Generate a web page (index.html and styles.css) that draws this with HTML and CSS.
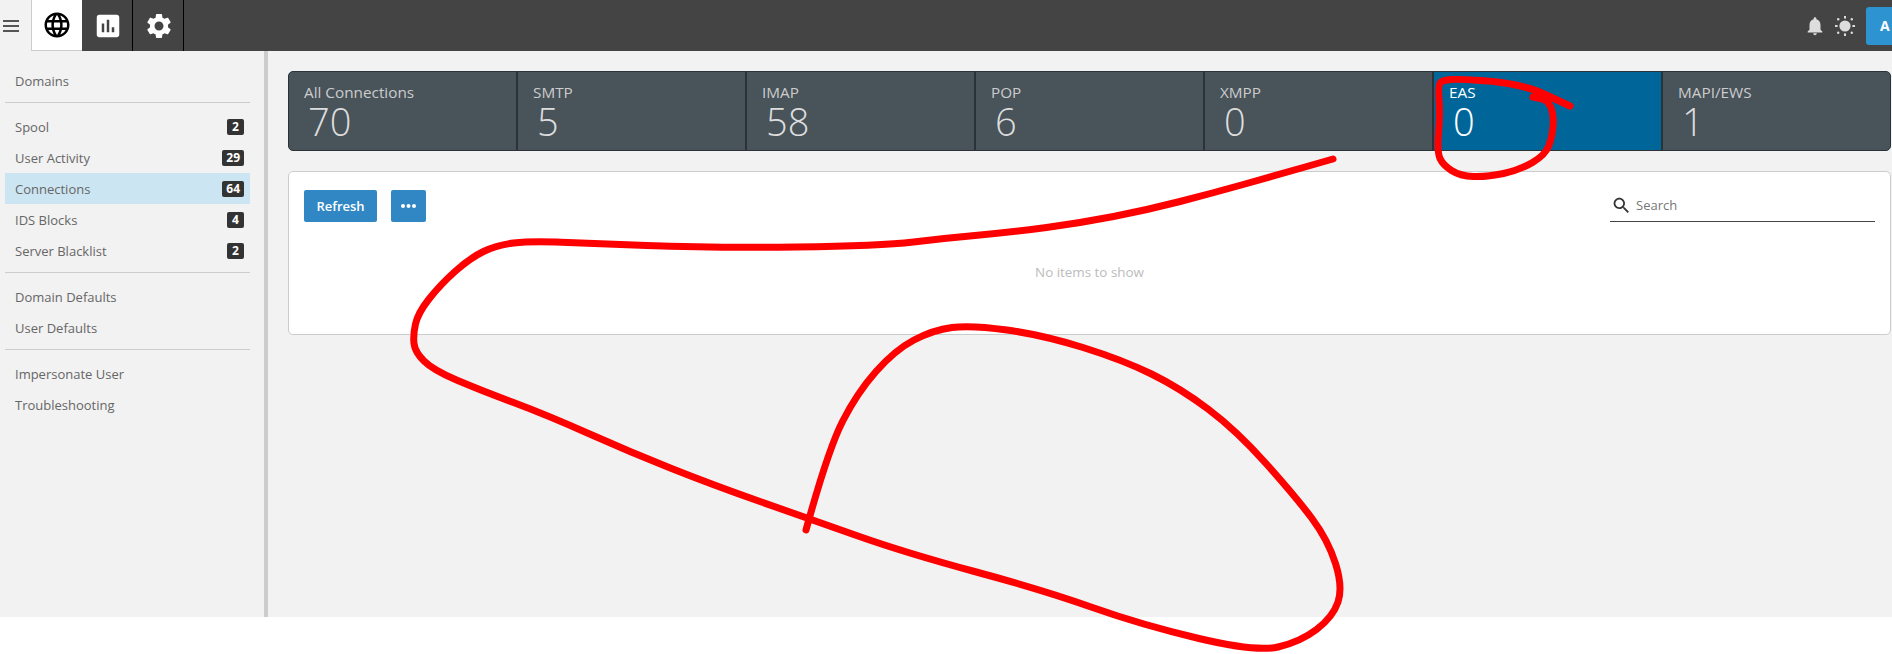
FILE: index.html
```html
<!DOCTYPE html>
<html lang="en">
  <head>
    <meta charset="UTF-8" />
    <meta name="viewport" content="width=device-width, initial-scale=1.0" />
    <title>Connections</title>
    <link rel="stylesheet" href="styles.css">
  </head>
  <body>
    <div class="app">
      <header class="topbar">
        <div class="menu-btn">
          <span></span><span></span><span></span>
        </div>
        <div class="tab tab-active">
          <svg viewBox="0 0 24 24" width="30" height="30"><path fill="#000" d="M11.99 2C6.47 2 2 6.48 2 12s4.47 10 9.99 10C17.52 22 22 17.52 22 12S17.52 2 11.99 2zm6.93 6h-2.95c-.32-1.25-.78-2.45-1.38-3.56 1.84.63 3.37 1.91 4.33 3.56zM12 4.04c.83 1.2 1.48 2.53 1.91 3.96h-3.82c.43-1.43 1.08-2.76 1.91-3.96zM4.26 14C4.1 13.36 4 12.69 4 12s.1-1.36.26-2h3.38c-.08.66-.14 1.32-.14 2 0 .68.06 1.34.14 2H4.26zm.82 2h2.95c.32 1.25.78 2.45 1.38 3.56-1.84-.63-3.37-1.9-4.33-3.56zm2.95-8H5.08c.96-1.66 2.49-2.93 4.33-3.56C8.81 5.55 8.35 6.75 8.03 8zM12 19.96c-.83-1.2-1.48-2.53-1.91-3.96h3.82c-.43 1.43-1.08 2.76-1.91 3.96zM14.34 14H9.66c-.09-.66-.16-1.32-.16-2 0-.68.07-1.35.16-2h4.68c.09.65.16 1.32.16 2 0 .68-.07 1.34-.16 2zm.25 5.56c.6-1.11 1.06-2.31 1.38-3.56h2.95c-.96 1.65-2.49 2.93-4.33 3.56zM16.36 14c.08-.66.14-1.32.14-2 0-.68-.06-1.34-.14-2h3.38c.16.64.26 1.31.26 2s-.1 1.36-.26 2h-3.38z"/></svg>
        </div>
        <div class="tab">
          <svg viewBox="0 0 24 24" width="30" height="30"><path fill="#fff" d="M19 3H5c-1.1 0-2 .9-2 2v14c0 1.1.9 2 2 2h14c1.1 0 2-.9 2-2V5c0-1.1-.9-2-2-2zM9 17H7v-7h2v7zm4 0h-2V7h2v10zm4 0h-2v-4h2v4z"/></svg>
        </div>
        <div class="tab">
          <svg viewBox="0 0 24 24" width="30" height="30"><path fill="#fff" d="M19.14 12.94c.04-.3.06-.61.06-.94 0-.32-.02-.64-.07-.94l2.03-1.58c.18-.14.23-.41.12-.61l-1.92-3.32c-.12-.22-.37-.29-.59-.22l-2.39.96c-.5-.38-1.03-.7-1.62-.94l-.36-2.54c-.04-.24-.24-.41-.48-.41h-3.84c-.24 0-.43.17-.47.41l-.36 2.54c-.59.24-1.13.57-1.62.94l-2.39-.96c-.22-.08-.47 0-.59.22L2.74 8.87c-.12.21-.08.47.12.61l2.03 1.58c-.05.3-.09.63-.09.94s.02.64.07.94l-2.03 1.58c-.18.14-.23.41-.12.61l1.92 3.32c.12.22.37.29.59.22l2.39-.96c.5.38 1.03.7 1.62.94l.36 2.54c.05.24.24.41.48.41h3.84c.24 0 .44-.17.47-.41l.36-2.54c.59-.24 1.13-.56 1.62-.94l2.39.96c.22.08.47 0 .59-.22l1.92-3.32c.12-.22.07-.47-.12-.61l-2.01-1.58zM12 15.6c-1.98 0-3.6-1.62-3.6-3.6s1.62-3.6 3.6-3.6 3.6 1.62 3.6 3.6-1.62 3.6-3.6 3.6z"/></svg>
        </div>
        <div class="topbar-right">
          <svg viewBox="0 0 24 24" width="22" height="22"><path fill="#ddd" d="M12 22c1.1 0 2-.9 2-2h-4c0 1.1.9 2 2 2zm6-6v-5c0-3.07-1.63-5.64-4.5-6.32V4c0-.83-.67-1.5-1.5-1.5s-1.5.67-1.5 1.5v.68C7.64 5.36 6 7.92 6 11v5l-2 2v1h16v-1l-2-2z"/></svg>
          <svg viewBox="0 0 22 22" width="22" height="22">
            <g fill="#ddd">
              <circle cx="11" cy="11" r="5.6"/>
              <rect x="10" y="1" width="2" height="2.6"/>
              <rect x="10" y="18.4" width="2" height="2.6"/>
              <rect x="1" y="10" width="2.6" height="2"/>
              <rect x="18.4" y="10" width="2.6" height="2"/>
              <circle cx="4.2" cy="4.2" r="1.2"/>
              <circle cx="17.8" cy="4.2" r="1.2"/>
              <circle cx="4.2" cy="17.8" r="1.2"/>
              <circle cx="17.8" cy="17.8" r="1.2"/>
            </g>
          </svg>
          <div class="user-btn">A</div>
        </div>
      </header>

      <div class="body-row">
        <nav class="sidebar">
          <div class="nav-item">Domains</div>
          <hr class="nav-sep" />
          <div class="nav-item">Spool <span class="badge">2</span></div>
          <div class="nav-item">User Activity <span class="badge">29</span></div>
          <div class="nav-item nav-active">Connections <span class="badge">64</span></div>
          <div class="nav-item">IDS Blocks <span class="badge">4</span></div>
          <div class="nav-item">Server Blacklist <span class="badge">2</span></div>
          <hr class="nav-sep" />
          <div class="nav-item">Domain Defaults</div>
          <div class="nav-item">User Defaults</div>
          <hr class="nav-sep" />
          <div class="nav-item">Impersonate User</div>
          <div class="nav-item">Troubleshooting</div>
        </nav>

        <main class="content">
          <div class="stats">
            <div class="stat"><div class="stat-label">All Connections</div><div class="stat-value">70</div></div>
            <div class="stat"><div class="stat-label">SMTP</div><div class="stat-value">5</div></div>
            <div class="stat"><div class="stat-label">IMAP</div><div class="stat-value">58</div></div>
            <div class="stat"><div class="stat-label">POP</div><div class="stat-value">6</div></div>
            <div class="stat"><div class="stat-label">XMPP</div><div class="stat-value">0</div></div>
            <div class="stat stat-active"><div class="stat-label">EAS</div><div class="stat-value">0</div></div>
            <div class="stat"><div class="stat-label">MAPI/EWS</div><div class="stat-value">1</div></div>
          </div>

          <section class="card">
            <div class="toolbar">
              <button class="btn">Refresh</button>
              <button class="btn btn-more">
                <svg viewBox="0 0 15 4" width="15" height="4"><g fill="#fff"><circle cx="2" cy="2" r="2"/><circle cx="7.5" cy="2" r="2"/><circle cx="13" cy="2" r="2"/></g></svg>
              </button>
              <div class="search">
                <svg viewBox="0 0 24 24" width="21" height="21"><path fill="#333" d="M15.5 14h-.79l-.28-.27C15.41 12.59 16 11.11 16 9.5 16 5.91 13.09 3 9.5 3S3 5.91 3 9.5 5.91 16 9.5 16c1.61 0 3.09-.59 4.23-1.57l.27.28v.79l5 4.99L20.49 19l-4.99-5zm-6 0C7.01 14 5 11.99 5 9.5S7.01 5 9.5 5 14 7.01 14 9.5 11.99 14 9.5 14z"/></svg>
                <span>Search</span>
              </div>
            </div>
            <div class="empty">No items to show</div>
          </section>
        </main>
      </div>
    </div>

    <!-- red marker scribbles drawn over the screenshot -->
    <svg class="scribble" viewBox="0 0 1892 654" width="1892" height="654">
      <path d="M1333 159 L1305 167 Q1277 175 1245 184 Q1213 193 1180 201.5 Q1147 210 1113.5 216.5 Q1080 223 1046.5 227.5 Q1013 232 980 235 Q947 238 913.5 242 Q880 246 796.5 247 Q713 248 646.5 245.5 Q580 243 555 242 Q530 241 513.5 243 Q497 245 483.5 251.5 Q470 258 455 271.5 Q440 285 429 299 Q418 313 415.5 324 Q413 335 414 343.5 Q415 352 424 361 Q433 370 456.5 380 Q480 390 513.5 402.5 Q547 415 588.5 433.5 Q630 452 671.5 468.5 Q713 485 760 501.5 Q807 518 856.5 535.5 Q906 553 974.5 571.5 Q1043 590 1092.5 607.5 Q1142 625 1199 638.5 Q1256 652 1278 647 Q1300 642 1316.5 629.5 Q1333 617 1338 602 Q1343 587 1335.5 563.5 Q1328 540 1312 518.5 Q1296 497 1266 463.5 Q1236 430 1208 409 Q1180 388 1151.5 374 Q1123 360 1083 347.5 Q1043 335 1007 330 Q971 325 952 327.5 Q933 330 914 340 Q895 350 876 371.5 Q857 393 842.5 421.5 Q828 450 806 530"/>
      <path d="M1570 106 L1561.5 102 Q1553 98 1543 93.5 Q1533 89 1518 85.5 Q1503 82 1481.5 80.5 Q1460 79 1451.5 79.5 Q1443 80 1440.5 82.5 Q1438 85 1439 100 Q1440 115 1438.5 133.5 Q1437 152 1440 158.5 Q1443 165 1451.5 170.5 Q1460 176 1473.5 176.5 Q1487 177 1503.5 173.5 Q1520 170 1532.5 162.5 Q1545 155 1548.5 146.5 Q1552 138 1553 126.5 Q1554 115 1551 107.5 Q1548 100 1540.5 98.5 L1533 97"/>
    </svg>
  </body>
</html>
```

FILE: styles.css
```css
body {
  margin: 0;
  background-color: #fff;
  font-family: "Open Sans", "Liberation Sans", sans-serif;
  overflow: hidden;
}
.app {
  height: 617px;
  display: flex;
  flex-direction: column;
}
.topbar {
  height: 51px;
  flex: none;
  display: flex;
  align-items: stretch;
  background-color: #444;
}
.menu-btn {
  width: 31px;
  box-sizing: border-box;
  padding-left: 3px;
  padding-right: 12px;
  display: flex;
  flex-direction: column;
  justify-content: center;
  gap: 3px;
  background-color: #f2f2f2;
}
.menu-btn span {
  display: block;
  height: 2px;
  background-color: #555;
}
.tab {
  width: 51px;
  box-sizing: border-box;
  padding-left: 1px;
  display: flex;
  align-items: center;
  justify-content: center;
  border-right: 1px solid #000;
}
.tab-active {
  padding-left: 0;
  background-color: #fff;
  border-left: 1px solid #ccc;
  border-bottom: 1px solid #ccc;
  border-right: none;
}
.topbar-right {
  margin-left: auto;
  display: flex;
  align-items: center;
  gap: 8px;
}
.user-btn {
  width: 26px;
  height: 38px;
  margin-left: 2px;
  box-sizing: border-box;
  padding-left: 14px;
  background-color: #2e93d1;
  border-radius: 3px 0 0 3px;
  color: #fff;
  font-size: 14px;
  font-weight: 700;
  line-height: 38px;
  overflow: hidden;
}
.body-row {
  flex: 1;
  display: flex;
  min-height: 0;
}
.sidebar {
  width: 268px;
  flex: none;
  box-sizing: border-box;
  padding: 14px 14px 0 5px;
  background-color: #f2f2f2;
  border-right: 4px solid #ccc;
}
.nav-item {
  height: 31px;
  padding: 0 6px 0 10px;
  display: flex;
  align-items: center;
  justify-content: space-between;
  color: #666;
  font-size: 13px;
}
.nav-active {
  background-color: #cce5f2;
}
.nav-sep {
  margin: 6px 0 8px;
  border: none;
  height: 1px;
  background-color: #ccc;
}
.badge {
  min-width: 9px;
  height: 16px;
  padding: 0 4px;
  background-color: #333;
  border-radius: 2px;
  color: #fff;
  font-size: 12px;
  font-weight: 700;
  line-height: 16px;
  text-align: center;
}
.content {
  flex: 1;
  min-width: 0;
  padding: 20px 1px 0 20px;
  background-color: #f2f2f2;
}
.stats {
  height: 80px;
  box-sizing: border-box;
  display: grid;
  grid-template-columns: repeat(6, 229px) 1fr;
  background-color: #48535a;
  border: 1px solid #2b3338;
  border-radius: 5px;
  overflow: hidden;
}
.stat {
  padding: 9px 15px 0;
  border-right: 2px solid #2b3338;
  color: #ccc;
}
.stat:last-child {
  border-right: none;
}
.stat-active {
  background-color: #00669a;
  color: #fff;
}
.stat-label {
  font-size: 15.3px;
  line-height: 22px;
}
.stat-value {
  padding-left: 4px;
  font-size: 38px;
  font-weight: 300;
  line-height: 36px;
  color: #ddd;
}
.stat-active .stat-value {
  color: #fff;
}
.card {
  height: 164px;
  box-sizing: border-box;
  margin-top: 20px;
  padding: 18px 15px 0;
  background-color: #fff;
  border: 1px solid #ccc;
  border-radius: 5px;
}
.toolbar {
  display: flex;
  align-items: flex-start;
  gap: 14px;
}
.btn {
  width: 73px;
  height: 32px;
  padding: 0;
  background-color: #3087c4;
  border: none;
  border-radius: 2px;
  color: #fff;
  font-family: inherit;
  font-size: 13px;
  font-weight: 600;
}
.btn-more {
  width: 35px;
  display: flex;
  align-items: center;
  justify-content: center;
}
.search {
  width: 265px;
  height: 32px;
  margin-left: auto;
  box-sizing: border-box;
  padding-left: 1px;
  padding-bottom: 1px;
  display: flex;
  align-items: center;
  gap: 4px;
  border-bottom: 1px solid #444;
  color: #777;
  font-size: 13px;
}
.empty {
  margin-top: 41px;
  color: #bbb;
  font-size: 13.4px;
  line-height: 18px;
  text-align: center;
}
.scribble {
  position: absolute;
  left: 0;
  top: 0;
  pointer-events: none;
}
.scribble path {
  fill: none;
  stroke: #f00;
  stroke-width: 7;
  stroke-linecap: round;
  stroke-linejoin: round;
}
```
